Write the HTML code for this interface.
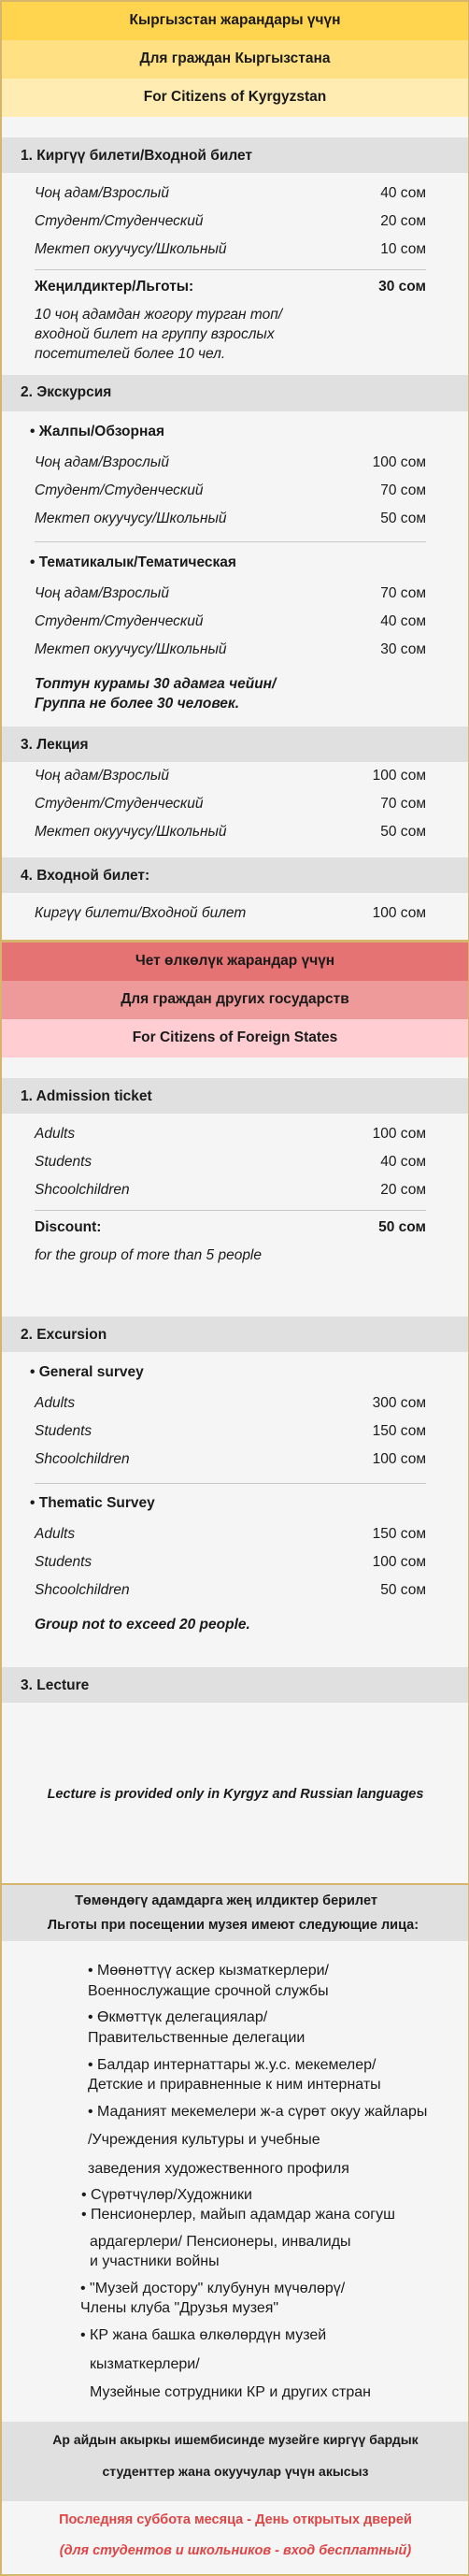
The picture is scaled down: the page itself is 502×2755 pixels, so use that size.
<!DOCTYPE html>
<html><head><meta charset="utf-8">
<style>
*{margin:0;padding:0;box-sizing:border-box}
html,body{width:502px;height:2755px;overflow:hidden;background:#d7b56d}
body{position:relative;font-family:"Liberation Sans",Arial,sans-serif;color:#1a1a1a}
.bg{position:absolute;left:2px;width:499px}
.t{position:absolute;line-height:20px;white-space:nowrap;font-size:15.5px}
.c{left:2px;width:499px;text-align:center}
.b{font-weight:bold}
.i{font-style:italic}
.h{left:22px;font-weight:bold;font-size:15.5px}
.l{left:37px;font-style:italic}
.p{right:46px;text-align:right}
.hr{position:absolute;left:37px;width:419px;height:1px;background:#c8c8c8}
.li{font-size:16px}
.red{color:#e04545}
</style></head><body>
<div class="bg" style="top:2px;height:2751px;background:#f5f5f5"></div>
<div class="bg" style="top:2px;height:41px;background:#ffd54f"></div>
<div class="bg" style="top:43px;height:41px;background:#ffe082"></div>
<div class="bg" style="top:84px;height:41px;background:#ffecb3"></div>
<div class="bg" style="top:147px;height:38px;background:#e0e0e0"></div>
<div class="bg" style="top:401px;height:39px;background:#e0e0e0"></div>
<div class="bg" style="top:777px;height:38px;background:#e0e0e0"></div>
<div class="bg" style="top:917px;height:38px;background:#e0e0e0"></div>
<div class="bg" style="top:1005px;height:3px;background:#d7b56d"></div>
<div class="bg" style="top:1008px;height:41px;background:#e57373"></div>
<div class="bg" style="top:1049px;height:41px;background:#ef9a9a"></div>
<div class="bg" style="top:1090px;height:41px;background:#ffcdd2"></div>
<div class="bg" style="top:1153px;height:38px;background:#e0e0e0"></div>
<div class="bg" style="top:1408px;height:38px;background:#e0e0e0"></div>
<div class="bg" style="top:1783px;height:38px;background:#e0e0e0"></div>
<div class="bg" style="top:2014px;height:2px;background:#d7b56d"></div>
<div class="bg" style="top:2016px;height:60px;background:#e0e0e0"></div>
<div class="bg" style="top:2590px;height:85px;background:#e0e0e0"></div>

<div class="t c b" style="top:12px">Кыргызстан жарандары үчүн</div>
<div class="t c b" style="top:53px">Для граждан Кыргызстана</div>
<div class="t c b" style="top:94px">For Citizens of Kyrgyzstan</div>

<div class="t h" style="top:157px">1. Киргүү билети/Входной билет</div>
<div class="t l" style="top:197px">Чоң адам/Взрослый</div><div class="t p" style="top:197px">40 сом</div>
<div class="t l" style="top:227px">Студент/Студенческий</div><div class="t p" style="top:227px">20 сом</div>
<div class="t l" style="top:257px">Мектеп окуучусу/Школьный</div><div class="t p" style="top:257px">10 сом</div>
<div class="hr" style="top:288px"></div>
<div class="t" style="left:37px;top:297px;font-weight:bold">Жеңилдиктер/Льготы:</div><div class="t p b" style="top:297px">30 сом</div>
<div class="t l" style="top:327px">10 чоң адамдан жогору турган топ/</div>
<div class="t l" style="top:348px">входной билет на группу взрослых</div>
<div class="t l" style="top:369px">посетителей более 10 чел.</div>

<div class="t h" style="top:410px">2. Экскурсия</div>
<div class="t b" style="left:32px;top:452px">• Жалпы/Обзорная</div>
<div class="t l" style="top:485px">Чоң адам/Взрослый</div><div class="t p" style="top:485px">100 сом</div>
<div class="t l" style="top:515px">Студент/Студенческий</div><div class="t p" style="top:515px">70 сом</div>
<div class="t l" style="top:545px">Мектеп окуучусу/Школьный</div><div class="t p" style="top:545px">50 сом</div>
<div class="hr" style="top:579px"></div>
<div class="t b" style="left:32px;top:592px">• Тематикалык/Тематическая</div>
<div class="t l" style="top:625px">Чоң адам/Взрослый</div><div class="t p" style="top:625px">70 сом</div>
<div class="t l" style="top:655px">Студент/Студенческий</div><div class="t p" style="top:655px">40 сом</div>
<div class="t l" style="top:685px">Мектеп окуучусу/Школьный</div><div class="t p" style="top:685px">30 сом</div>
<div class="t l b" style="top:722px">Топтун курамы 30 адамга чейин/</div>
<div class="t l b" style="top:743px">Группа не более 30 человек.</div>

<div class="t h" style="top:787px">3. Лекция</div>
<div class="t l" style="top:820px">Чоң адам/Взрослый</div><div class="t p" style="top:820px">100 сом</div>
<div class="t l" style="top:850px">Студент/Студенческий</div><div class="t p" style="top:850px">70 сом</div>
<div class="t l" style="top:880px">Мектеп окуучусу/Школьный</div><div class="t p" style="top:880px">50 сом</div>

<div class="t h" style="top:927px">4. Входной билет:</div>
<div class="t l" style="top:967px">Киргүү билети/Входной билет</div><div class="t p" style="top:967px">100 сом</div>

<div class="t c b" style="top:1018px">Чет өлкөлүк жарандар үчүн</div>
<div class="t c b" style="top:1059px">Для граждан других государств</div>
<div class="t c b" style="top:1100px">For Citizens of Foreign States</div>

<div class="t h" style="top:1163px">1. Admission ticket</div>
<div class="t l" style="top:1203px">Adults</div><div class="t p" style="top:1203px">100 сом</div>
<div class="t l" style="top:1233px">Students</div><div class="t p" style="top:1233px">40 сом</div>
<div class="t l" style="top:1263px">Shcoolchildren</div><div class="t p" style="top:1263px">20 сом</div>
<div class="hr" style="top:1294px"></div>
<div class="t b" style="left:37px;top:1303px">Discount:</div><div class="t p b" style="top:1303px">50 сом</div>
<div class="t l" style="top:1333px">for the group of more than 5 people</div>

<div class="t h" style="top:1418px">2. Excursion</div>
<div class="t b" style="left:32px;top:1458px">• General survey</div>
<div class="t l" style="top:1491px">Adults</div><div class="t p" style="top:1491px">300 сом</div>
<div class="t l" style="top:1521px">Students</div><div class="t p" style="top:1521px">150 сом</div>
<div class="t l" style="top:1551px">Shcoolchildren</div><div class="t p" style="top:1551px">100 сом</div>
<div class="hr" style="top:1586px"></div>
<div class="t b" style="left:32px;top:1598px">• Thematic Survey</div>
<div class="t l" style="top:1631px">Adults</div><div class="t p" style="top:1631px">150 сом</div>
<div class="t l" style="top:1661px">Students</div><div class="t p" style="top:1661px">100 сом</div>
<div class="t l" style="top:1691px">Shcoolchildren</div><div class="t p" style="top:1691px">50 сом</div>
<div class="t l b" style="top:1728px">Group not to exceed 20 people.</div>

<div class="t h" style="top:1793px">3. Lecture</div>
<div class="t i b" style="left:2px;width:500px;text-align:center;top:1909px;font-size:14.5px">Lecture is provided only in Kyrgyz and Russian languages</div>

<div class="t b" style="left:2px;width:480px;text-align:center;top:2023px;font-size:14.5px">Төмөндөгү адамдарга жең илдиктер берилет</div>
<div class="t b" style="left:2px;width:495px;text-align:center;top:2049px;font-size:14.5px">Льготы при посещении музея имеют следующие лица:</div>

<div class="t li" style="left:94px;top:2098px">• Мөөнөттүү аскер кызматкерлери/</div>
<div class="t li" style="left:94px;top:2120px">Военнослужащие срочной службы</div>
<div class="t li" style="left:94px;top:2148px">• Өкмөттүк делегациялар/</div>
<div class="t li" style="left:94px;top:2170px">Правительственные делегации</div>
<div class="t li" style="left:94px;top:2199px">• Балдар интернаттары ж.у.с. мекемелер/</div>
<div class="t li" style="left:94px;top:2220px">Детские и приравненные к ним интернаты</div>
<div class="t li" style="left:94px;top:2249px">• Маданият мекемелери ж-а сүрөт окуу жайлары</div>
<div class="t li" style="left:94px;top:2279px">/Учреждения культуры и учебные</div>
<div class="t li" style="left:94px;top:2310px">заведения художественного профиля</div>
<div class="t li" style="left:87px;top:2338px">• Сүрөтчүлөр/Художники</div>
<div class="t li" style="left:87px;top:2359px">• Пенсионерлер, майып адамдар жана согуш</div>
<div class="t li" style="left:96px;top:2388px">ардагерлери/ Пенсионеры, инвалиды</div>
<div class="t li" style="left:96px;top:2409px">и участники войны</div>
<div class="t li" style="left:86px;top:2438px">• "Музей достору" клубунун мүчөлөрү/</div>
<div class="t li" style="left:86px;top:2459px">Члены клуба "Друзья музея"</div>
<div class="t li" style="left:86px;top:2488px">• КР жана башка өлкөлөрдүн музей</div>
<div class="t li" style="left:96px;top:2519px">кызматкерлери/</div>
<div class="t li" style="left:96px;top:2549px">Музейные сотрудники КР и других стран</div>

<div class="t b" style="left:2px;width:500px;text-align:center;top:2599px;font-size:14px">Ар айдын акыркы ишембисинде музейге киргүү бардык</div>
<div class="t b" style="left:2px;width:500px;text-align:center;top:2633px;font-size:14px">студенттер жана окуучулар үчүн акысыз</div>

<div class="t b red" style="left:2px;width:500px;text-align:center;top:2685px;font-size:14.5px">Последняя суббота месяца - День открытых дверей</div>
<div class="t b i red" style="left:2px;width:500px;text-align:center;top:2718px;font-size:14.5px">(для студентов и школьников - вход бесплатный)</div>
</body></html>
